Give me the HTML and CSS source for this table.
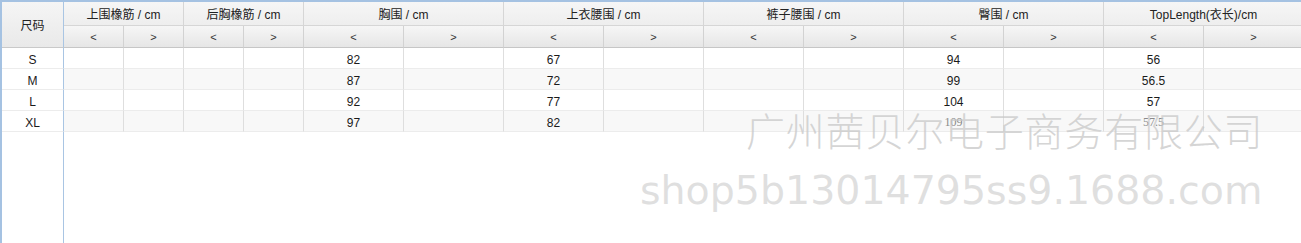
FILE: index.html
```html
<!DOCTYPE html>
<html lang="zh">
<head>
<meta charset="utf-8">
<link rel="stylesheet" href="styles.css">
</head>
<body>
<div class="frame">
  <div class="grid">
    <div class="hd size-hd">尺码</div>
    <div class="hd g2">上围橡筋 / cm</div>
    <div class="hd g2">后胸橡筋 / cm</div>
    <div class="hd g2">胸围 / cm</div>
    <div class="hd g2">上衣腰围 / cm</div>
    <div class="hd g2">裤子腰围 / cm</div>
    <div class="hd g2">臀围 / cm</div>
    <div class="hd g2">TopLength(衣长)/cm</div>

    <div class="sub">&lt;</div><div class="sub">&gt;</div>
    <div class="sub">&lt;</div><div class="sub">&gt;</div>
    <div class="sub">&lt;</div><div class="sub">&gt;</div>
    <div class="sub">&lt;</div><div class="sub">&gt;</div>
    <div class="sub">&lt;</div><div class="sub">&gt;</div>
    <div class="sub">&lt;</div><div class="sub">&gt;</div>
    <div class="sub">&lt;</div><div class="sub">&gt;</div>

    <div class="c size">S</div><div class="c"></div><div class="c"></div><div class="c"></div><div class="c"></div>
    <div class="c">82</div><div class="c"></div><div class="c">67</div><div class="c"></div><div class="c"></div><div class="c"></div>
    <div class="c">94</div><div class="c"></div><div class="c">56</div><div class="c"></div>

    <div class="c size alt">M</div><div class="c alt"></div><div class="c alt"></div><div class="c alt"></div><div class="c alt"></div>
    <div class="c alt">87</div><div class="c alt"></div><div class="c alt">72</div><div class="c alt"></div><div class="c alt"></div><div class="c alt"></div>
    <div class="c alt">99</div><div class="c alt"></div><div class="c alt">56.5</div><div class="c alt"></div>

    <div class="c size">L</div><div class="c"></div><div class="c"></div><div class="c"></div><div class="c"></div>
    <div class="c">92</div><div class="c"></div><div class="c">77</div><div class="c"></div><div class="c"></div><div class="c"></div>
    <div class="c">104</div><div class="c"></div><div class="c">57</div><div class="c"></div>

    <div class="c size alt">XL</div><div class="c alt"></div><div class="c alt"></div><div class="c alt"></div><div class="c alt"></div>
    <div class="c alt">97</div><div class="c alt"></div><div class="c alt">82</div><div class="c alt"></div><div class="c alt"></div><div class="c alt"></div>
    <div class="c alt faded">109</div><div class="c alt"></div><div class="c alt faded">57.5</div><div class="c alt"></div>

    <div class="filler"></div>
  </div>
  <div class="wm wm-cn">广州茜贝尔电子商务有限公司</div>
  <div class="wm wm-en">shop5b13014795ss9.1688.com</div>
</div>
</body>
</html>
```

FILE: styles.css
```css
html, body {
  margin: 0;
  padding: 0;
  background: #ffffff;
  overflow: hidden;
}

.frame {
  position: relative;
  width: 1301px;
  height: 243px;
  overflow: hidden;
  box-sizing: border-box;
  border-top: 2px solid #a5c2e2;
  border-left: 2px solid #a5c2e2;
  font-family: "Liberation Sans", "Noto Sans CJK SC", sans-serif;
  font-size: 12px;
  color: #1a1a1a;
}

.grid {
  display: grid;
  grid-template-columns: 62px repeat(4, 60px) repeat(10, 100px);
  grid-template-rows: 24px 22px repeat(4, 21px) 1fr;
  height: 241px;
  width: 1364px;
}

.grid > div {
  box-sizing: border-box;
  display: flex;
  align-items: center;
  justify-content: center;
  border-right: 1px solid #dedede;
  white-space: nowrap;
}

.hd {
  background: linear-gradient(#f6f6f6, #eeeeee);
  border-bottom: 1px solid #d6d6d6;
  border-right-color: #d6d6d6 !important;
  color: #222;
}

.g2 {
  grid-column: span 2;
}

.size-hd {
  grid-row: span 2;
  border-right: 1px solid #a9c5e3 !important;
  border-bottom: 1px solid #c9c9c9;
  background: linear-gradient(#f5f5f5, #e9e9e9);
}

.sub {
  background: linear-gradient(#f6f6f6, #e6e6e6);
  border-bottom: 1px solid #c6c6c6;
  border-right-color: #d2d2d2 !important;
  color: #333;
  font-size: 11px;
}

.c {
  border-bottom: 1px solid #ececec;
  background: #ffffff;
  padding-top: 3px;
}

.c.alt {
  background: #f8f8f8;
}

.c.size {
  border-right: 1px solid #a9c5e3;
  background: #ffffff;
}

.c.faded {
  color: #8a8a8a;
  font-family: "Liberation Serif", serif;
}

.filler {
  grid-column: 1 / span 1;
  border-right: 1px solid #a9c5e3 !important;
}

.wm {
  position: absolute;
  white-space: nowrap;
  pointer-events: none;
}

.wm-cn {
  left: 744px;
  top: 101px;
  font-family: "Noto Sans CJK SC", sans-serif;
  font-weight: 300;
  font-size: 39px;
  letter-spacing: 0.8px;
  line-height: 52px;
  color: rgba(200, 200, 200, 0.75);
}

.wm-en {
  left: 638px;
  top: 162px;
  font-family: "DejaVu Sans", sans-serif;
  font-size: 39.5px;
  line-height: 52px;
  color: rgba(215, 215, 215, 0.8);
}
```
